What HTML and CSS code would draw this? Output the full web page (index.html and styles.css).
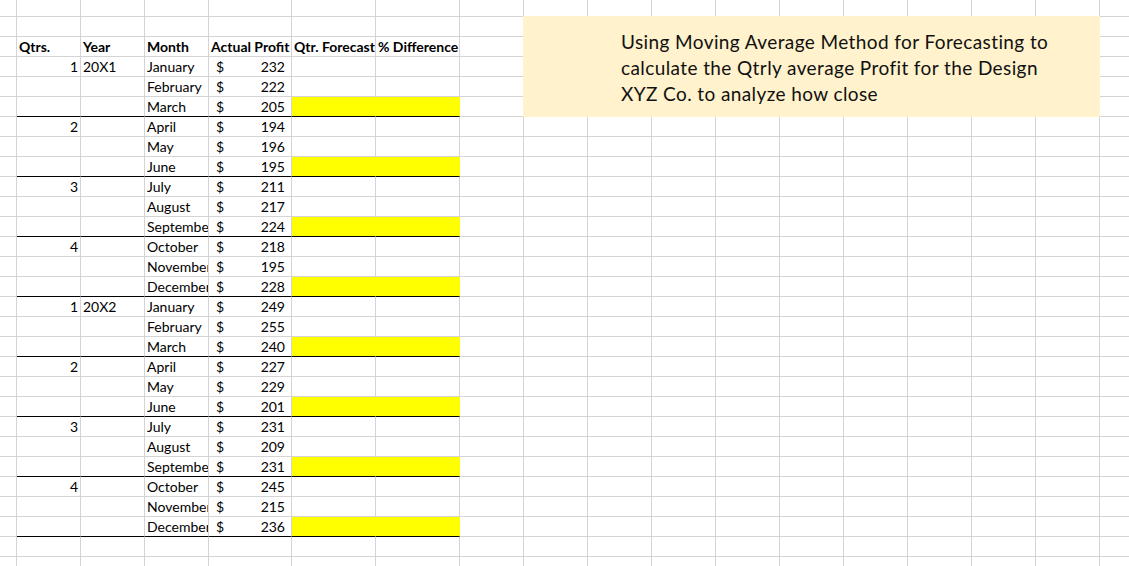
FILE: index.html
```html
<!DOCTYPE html>
<html>
<head>
<meta charset="utf-8">
<link rel="stylesheet" href="styles.css">
</head>
<body>
<div class="sheet">
  <div class="row first"><div class="c a"></div><div class="c b"></div><div class="c yr"></div><div class="c m"></div><div class="c e"></div><div class="c f"></div><div class="c g"></div><div class="c rest"></div></div>
  <div class="row"><div class="c a"></div><div class="c b"></div><div class="c yr"></div><div class="c m"></div><div class="c e"></div><div class="c f"></div><div class="c g"></div><div class="c rest"></div></div>
  <div class="row head"><div class="c a"></div><div class="c b">Qtrs.</div><div class="c yr">Year</div><div class="c m">Month</div><div class="c e">Actual Profit</div><div class="c f">Qtr. Forecast</div><div class="c g">% Difference</div><div class="c rest"></div></div>

  <div class="row"><div class="c a"></div><div class="c b num">1</div><div class="c yr">20X1</div><div class="c m">January</div><div class="c e"><span>$</span><span>232</span></div><div class="c f"></div><div class="c g"></div><div class="c rest"></div></div>
  <div class="row"><div class="c a"></div><div class="c b num"></div><div class="c yr"></div><div class="c m">February</div><div class="c e"><span>$</span><span>222</span></div><div class="c f"></div><div class="c g"></div><div class="c rest"></div></div>
  <div class="row qend"><div class="c a"></div><div class="c b num"></div><div class="c yr"></div><div class="c m">March</div><div class="c e"><span>$</span><span>205</span></div><div class="c f hl"></div><div class="c g hl"></div><div class="c rest"></div></div>

  <div class="row"><div class="c a"></div><div class="c b num">2</div><div class="c yr"></div><div class="c m">April</div><div class="c e"><span>$</span><span>194</span></div><div class="c f"></div><div class="c g"></div><div class="c rest"></div></div>
  <div class="row"><div class="c a"></div><div class="c b num"></div><div class="c yr"></div><div class="c m">May</div><div class="c e"><span>$</span><span>196</span></div><div class="c f"></div><div class="c g"></div><div class="c rest"></div></div>
  <div class="row qend"><div class="c a"></div><div class="c b num"></div><div class="c yr"></div><div class="c m">June</div><div class="c e"><span>$</span><span>195</span></div><div class="c f hl"></div><div class="c g hl"></div><div class="c rest"></div></div>

  <div class="row"><div class="c a"></div><div class="c b num">3</div><div class="c yr"></div><div class="c m">July</div><div class="c e"><span>$</span><span>211</span></div><div class="c f"></div><div class="c g"></div><div class="c rest"></div></div>
  <div class="row"><div class="c a"></div><div class="c b num"></div><div class="c yr"></div><div class="c m">August</div><div class="c e"><span>$</span><span>217</span></div><div class="c f"></div><div class="c g"></div><div class="c rest"></div></div>
  <div class="row qend"><div class="c a"></div><div class="c b num"></div><div class="c yr"></div><div class="c m">September</div><div class="c e"><span>$</span><span>224</span></div><div class="c f hl"></div><div class="c g hl"></div><div class="c rest"></div></div>

  <div class="row"><div class="c a"></div><div class="c b num">4</div><div class="c yr"></div><div class="c m">October</div><div class="c e"><span>$</span><span>218</span></div><div class="c f"></div><div class="c g"></div><div class="c rest"></div></div>
  <div class="row"><div class="c a"></div><div class="c b num"></div><div class="c yr"></div><div class="c m">November</div><div class="c e"><span>$</span><span>195</span></div><div class="c f"></div><div class="c g"></div><div class="c rest"></div></div>
  <div class="row qend"><div class="c a"></div><div class="c b num"></div><div class="c yr"></div><div class="c m">December</div><div class="c e"><span>$</span><span>228</span></div><div class="c f hl"></div><div class="c g hl"></div><div class="c rest"></div></div>

  <div class="row"><div class="c a"></div><div class="c b num">1</div><div class="c yr">20X2</div><div class="c m">January</div><div class="c e"><span>$</span><span>249</span></div><div class="c f"></div><div class="c g"></div><div class="c rest"></div></div>
  <div class="row"><div class="c a"></div><div class="c b num"></div><div class="c yr"></div><div class="c m">February</div><div class="c e"><span>$</span><span>255</span></div><div class="c f"></div><div class="c g"></div><div class="c rest"></div></div>
  <div class="row qend"><div class="c a"></div><div class="c b num"></div><div class="c yr"></div><div class="c m">March</div><div class="c e"><span>$</span><span>240</span></div><div class="c f hl"></div><div class="c g hl"></div><div class="c rest"></div></div>

  <div class="row"><div class="c a"></div><div class="c b num">2</div><div class="c yr"></div><div class="c m">April</div><div class="c e"><span>$</span><span>227</span></div><div class="c f"></div><div class="c g"></div><div class="c rest"></div></div>
  <div class="row"><div class="c a"></div><div class="c b num"></div><div class="c yr"></div><div class="c m">May</div><div class="c e"><span>$</span><span>229</span></div><div class="c f"></div><div class="c g"></div><div class="c rest"></div></div>
  <div class="row qend"><div class="c a"></div><div class="c b num"></div><div class="c yr"></div><div class="c m">June</div><div class="c e"><span>$</span><span>201</span></div><div class="c f hl"></div><div class="c g hl"></div><div class="c rest"></div></div>

  <div class="row"><div class="c a"></div><div class="c b num">3</div><div class="c yr"></div><div class="c m">July</div><div class="c e"><span>$</span><span>231</span></div><div class="c f"></div><div class="c g"></div><div class="c rest"></div></div>
  <div class="row"><div class="c a"></div><div class="c b num"></div><div class="c yr"></div><div class="c m">August</div><div class="c e"><span>$</span><span>209</span></div><div class="c f"></div><div class="c g"></div><div class="c rest"></div></div>
  <div class="row qend"><div class="c a"></div><div class="c b num"></div><div class="c yr"></div><div class="c m">September</div><div class="c e"><span>$</span><span>231</span></div><div class="c f hl"></div><div class="c g hl"></div><div class="c rest"></div></div>

  <div class="row"><div class="c a"></div><div class="c b num">4</div><div class="c yr"></div><div class="c m">October</div><div class="c e"><span>$</span><span>245</span></div><div class="c f"></div><div class="c g"></div><div class="c rest"></div></div>
  <div class="row"><div class="c a"></div><div class="c b num"></div><div class="c yr"></div><div class="c m">November</div><div class="c e"><span>$</span><span>215</span></div><div class="c f"></div><div class="c g"></div><div class="c rest"></div></div>
  <div class="row qend"><div class="c a"></div><div class="c b num"></div><div class="c yr"></div><div class="c m">December</div><div class="c e"><span>$</span><span>236</span></div><div class="c f hl"></div><div class="c g hl"></div><div class="c rest"></div></div>

  <div class="row"><div class="c a"></div><div class="c b"></div><div class="c yr"></div><div class="c m"></div><div class="c e"></div><div class="c f"></div><div class="c g"></div><div class="c rest"></div></div>
  <div class="row"><div class="c a"></div><div class="c b"></div><div class="c yr"></div><div class="c m"></div><div class="c e"></div><div class="c f"></div><div class="c g"></div><div class="c rest"></div></div>

  <div class="note">Using Moving Average Method for Forecasting to<br>calculate the Qtrly average Profit for the Design<br>XYZ Co. to analyze how close</div>
</div>
</body>
</html>
```
FILE: styles.css
```css
html, body {
  margin: 0;
  padding: 0;
  background: #ffffff;
  overflow: hidden;
}
.sheet {
  position: relative;
  width: 1129px;
  height: 566px;
  overflow: hidden;
  font-family: Lato, "Liberation Sans", sans-serif;
  font-size: 14px;
  color: #000;
}
.row {
  display: flex;
  height: 20px;
}
.row.first {
  height: 17px;
}
.c {
  box-sizing: border-box;
  flex: none;
  height: 100%;
  border-right: 1px solid #d4d4d4;
  border-bottom: 1px solid #d4d4d4;
  line-height: 19px;
  white-space: nowrap;
  overflow: hidden;
  padding: 0 2px;
}
.a { width: 17px; padding: 0; }
.b { width: 64px; }
.yr { width: 64px; }
.m { width: 64px; padding-right: 0; text-overflow: clip; }
.e { width: 83px; display: flex; justify-content: space-between; padding: 0 6px 0 7px; }
.f { width: 84px; }
.g { width: 84px; }
.rest {
  flex: 1;
  border-right: none;
  padding: 0;
  background: repeating-linear-gradient(to right, transparent 0, transparent 63px, #d4d4d4 63px, #d4d4d4 64px);
}
.head .c { font-weight: 700; }
.head .e { display: block; padding: 0 2px; }
.num { text-align: right; }
.qend .b, .qend .yr, .qend .m, .qend .e, .qend .f, .qend .g {
  border-bottom-color: #000;
}
.hl {
  background: #ffff00;
  border-right-color: #ffff00;
}
.note {
  position: absolute;
  left: 523px;
  top: 16px;
  width: 577px;
  height: 101px;
  box-sizing: border-box;
  background: #fff2cc;
  padding: 13px 0 0 98px;
  font-size: 19px;
  letter-spacing: 0.4px;
  line-height: 26px;
  color: #111;
}
```
